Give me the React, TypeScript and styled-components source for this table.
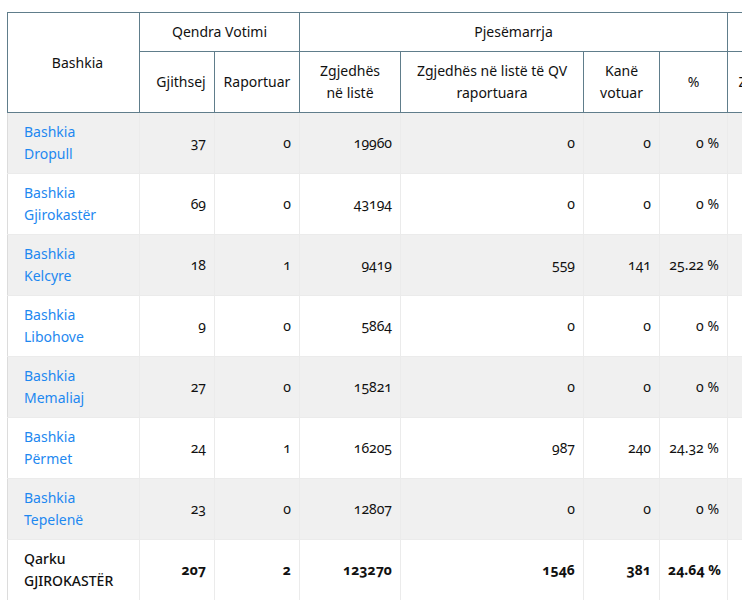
import React from "react";
import styled, { createGlobalStyle } from "styled-components";

const Global = createGlobalStyle`
  html, body { margin: 0; padding: 0; background: #fff; overflow: hidden; }
  body { font-family: "Noto Sans", "Open Sans", sans-serif; color: #1c1c1c; }
`;

const Wrap = styled.div`
  padding: 12px 0 0 7px;
  width: 742px;
  height: 600px;
  overflow: hidden;
  box-sizing: border-box;
`;

const Table = styled.table`
  border-collapse: collapse;
  table-layout: fixed;
  width: 942px;
  font-size: 14px;
  line-height: 22px;
  font-variant-numeric: oldstyle-nums;
`;

const Th = styled.th<{ $first?: boolean }>`
  border: 1px solid #607d8b;
  padding: 8px 8px 8px ${(p) => (p.$first ? "16px" : "8px")};
  font-weight: 450;
  text-align: center;
  vertical-align: middle;
  background: #fff;
  color: #111;
`;

const Tr = styled.tr<{ $odd?: boolean }>`
  background: ${(p) => (p.$odd ? "#f0f0f0" : "#fff")};
`;

const Td = styled.td<{ $first?: boolean; $bold?: boolean }>`
  border: 1px solid #ebebeb;
  border-left-color: ${(p) => (p.$first ? "#dcdcdc" : "#ebebeb")};
  padding: 8px 8px 8px ${(p) => (p.$first ? "16px" : "8px")};
  text-align: ${(p) => (p.$first ? "left" : "right")};
  vertical-align: middle;
  font-weight: ${(p) => (p.$bold ? 700 : 400)};
  white-space: nowrap;
  height: 44px;
  color: #111;
`;

const Link = styled.a`
  color: #1e88f0;
  text-decoration: none;
  display: block;
  width: 90px;
  white-space: normal;
`;

const Total = styled.span`
  font-weight: 500;
  display: block;
  width: 110px;
  white-space: normal;
`;

type Row = {
  name: string;
  all: number;
  rep: number;
  list: number;
  listRep: number;
  voted: number;
  pct: string;
};

const rows: Row[] = [
  { name: "Bashkia Dropull", all: 37, rep: 0, list: 19960, listRep: 0, voted: 0, pct: "0 %" },
  { name: "Bashkia Gjirokastër", all: 69, rep: 0, list: 43194, listRep: 0, voted: 0, pct: "0 %" },
  { name: "Bashkia Kelcyre", all: 18, rep: 1, list: 9419, listRep: 559, voted: 141, pct: "25.22 %" },
  { name: "Bashkia Libohove", all: 9, rep: 0, list: 5864, listRep: 0, voted: 0, pct: "0 %" },
  { name: "Bashkia Memaliaj", all: 27, rep: 0, list: 15821, listRep: 0, voted: 0, pct: "0 %" },
  { name: "Bashkia Përmet", all: 24, rep: 1, list: 16205, listRep: 987, voted: 240, pct: "24.32 %" },
  { name: "Bashkia Tepelenë", all: 23, rep: 0, list: 12807, listRep: 0, voted: 0, pct: "0 %" },
];

const widths = [132, 75, 85, 101, 183, 76, 68, 82, 140];

export default function App() {
  return (
    <>
      <Global />
      <Wrap>
        <Table>
          <colgroup>
            {widths.map((w, i) => (
              <col key={i} style={{ width: w }} />
            ))}
          </colgroup>
          <thead>
            <tr>
              <Th $first rowSpan={2}>Bashkia</Th>
              <Th colSpan={2}>Qendra Votimi</Th>
              <Th colSpan={4}>Pjesëmarrja</Th>
              <Th colSpan={2}>Rezultatet</Th>
            </tr>
            <tr>
              <Th $first>Gjithsej</Th>
              <Th>Raportuar</Th>
              <Th>
                Zgjedhës
                <br />
                në listë
              </Th>
              <Th>Zgjedhës në listë të QV raportuara</Th>
              <Th>Kanë votuar</Th>
              <Th>%</Th>
              <Th>Zgjedhës</Th>
              <Th>Vota</Th>
            </tr>
          </thead>
          <tbody>
            {rows.map((r, i) => (
              <Tr key={r.name} $odd={i % 2 === 0}>
                <Td $first>
                  <Link href="#">{r.name}</Link>
                </Td>
                <Td>{r.all}</Td>
                <Td>{r.rep}</Td>
                <Td>{r.list}</Td>
                <Td>{r.listRep}</Td>
                <Td>{r.voted}</Td>
                <Td>{r.pct}</Td>
                <Td></Td>
                <Td></Td>
              </Tr>
            ))}
            <Tr>
              <Td $first>
                <Total>Qarku GJIROKASTËR</Total>
              </Td>
              <Td $bold>207</Td>
              <Td $bold>2</Td>
              <Td $bold>123270</Td>
              <Td $bold>1546</Td>
              <Td $bold>381</Td>
              <Td $bold>24.64 %</Td>
              <Td $bold></Td>
              <Td $bold></Td>
            </Tr>
          </tbody>
        </Table>
      </Wrap>
    </>
  );
}
